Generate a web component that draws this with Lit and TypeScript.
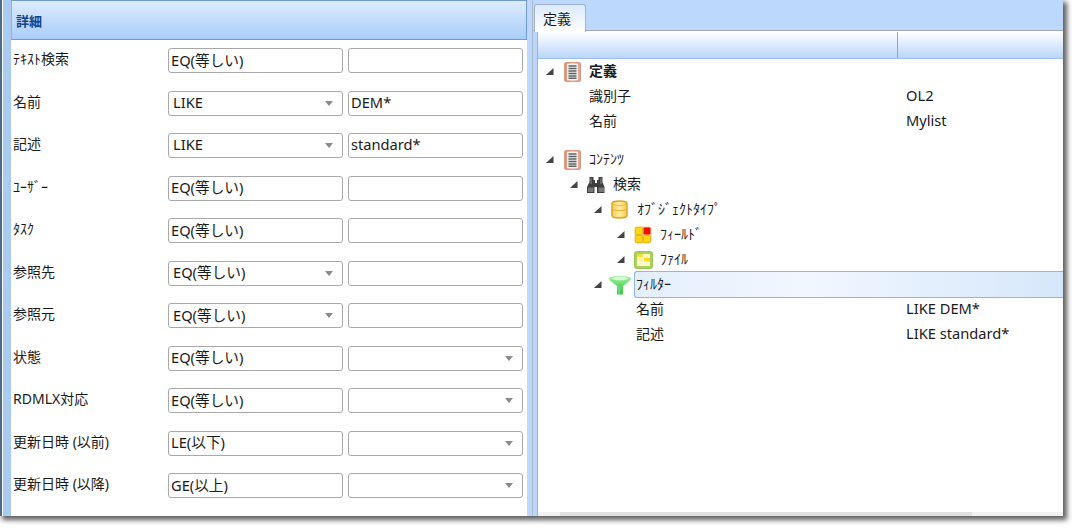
import { LitElement, html, css, svg } from "lit";
import { customElement } from "lit/decorators.js";

type F = { t: string; dd?: boolean };
const rows: { label: string; a: F; b: F }[] = [
  { label: "ﾃｷｽﾄ検索", a: { t: "EQ(等しい)" }, b: { t: "" } },
  { label: "名前", a: { t: "LIKE", dd: true }, b: { t: "DEM*" } },
  { label: "記述", a: { t: "LIKE", dd: true }, b: { t: "standard*" } },
  { label: "ﾕｰｻﾞｰ", a: { t: "EQ(等しい)" }, b: { t: "" } },
  { label: "ﾀｽｸ", a: { t: "EQ(等しい)" }, b: { t: "" } },
  { label: "参照先", a: { t: "EQ(等しい)", dd: true }, b: { t: "" } },
  { label: "参照元", a: { t: "EQ(等しい)", dd: true }, b: { t: "" } },
  { label: "状態", a: { t: "EQ(等しい)" }, b: { t: "", dd: true } },
  { label: "RDMLX対応", a: { t: "EQ(等しい)" }, b: { t: "", dd: true } },
  { label: "更新日時 (以前)", a: { t: "LE(以下)" }, b: { t: "", dd: true } },
  { label: "更新日時 (以降)", a: { t: "GE(以上)" }, b: { t: "", dd: true } },
];

const icons: Record<string, unknown> = {
  doc: svg`<svg width="17" height="20" viewBox="0 0 17 20"><defs><linearGradient id="dg" x1="0" x2="1"><stop offset="0" stop-color="#d98c70"/><stop offset=".5" stop-color="#f3d9cd"/><stop offset="1" stop-color="#dd9c82"/></linearGradient></defs><rect x=".5" y=".5" width="16" height="19" rx="1.500" fill="url(#dg)" stroke="#d9987f"/><rect x="3" y="2" width="11" height="16" fill="#f4f1ee"/><path d="M4.500 4h8M4.500 6.500h8M4.500 9h8M4.500 11.500h8M4.500 14h8M4.500 16.200h8" stroke="#5f6468" stroke-width="1.400"/></svg>`,
  bino: svg`<svg width="18" height="18" viewBox="0 0 18 18"><path d="M2.500 1h4v3h1.500v3h2V4h1.500V1h4v5l2 5v6h-7.500v-6h-2.500v6H0v-6l2.500-5z" fill="#3e3e3e"/><rect x="1" y="11.500" width="5.500" height="4.500" fill="#777"/><rect x="11.500" y="11.500" width="5.500" height="4.500" fill="#777"/><path d="M4 2v6M14 2v6" stroke="#8c8c8c"/></svg>`,
  db: svg`<svg width="17" height="19" viewBox="0 0 17 19"><defs><linearGradient id="yg" x1="0" x2="1"><stop offset="0" stop-color="#f8cf55"/><stop offset=".5" stop-color="#ffeb9c"/><stop offset="1" stop-color="#f6ca4c"/></linearGradient></defs><path d="M1 3.500C1 .2 16 .2 16 3.500v12c0 3.300-15 3.300-15 0z" fill="url(#yg)" stroke="#d9a52e" stroke-width="1.500"/><path d="M2 9.500c3 1.500 10 1.500 13 0" stroke="#d8ae42" fill="none"/><path d="M2 4.500c3 1.500 10 1.500 13 0" stroke="#e3bf58" fill="none"/></svg>`,
  field: svg`<svg width="18" height="18" viewBox="0 0 18 18"><rect x=".5" y=".5" width="17" height="17" rx="3" fill="#f3cd72"/><rect x="1.500" y="1.500" width="7" height="7" rx="1" fill="#fcd90f" stroke="#e0aa18" stroke-width=".7"/><rect x="9.500" y="1.500" width="7" height="7" rx="1" fill="#ee0f0f"/><rect x="1.500" y="9.500" width="7" height="7" rx="1" fill="#fcd90f" stroke="#e0aa18" stroke-width=".7"/><rect x="9.500" y="9.500" width="7" height="7" rx="1" fill="#fcd90f" stroke="#e0aa18" stroke-width=".7"/></svg>`,
  file: svg`<svg width="19" height="18" viewBox="0 0 19 18"><rect x=".5" y=".5" width="18" height="17" rx="2" fill="#a9d25c" stroke="#9cc650"/><rect x="3" y="3" width="13" height="12" fill="#fdf6c6"/><rect x="3" y="3" width="6.500" height="3" fill="#f7dc40"/><rect x="9.500" y="6" width="6.500" height="5" fill="#f9dc20"/><rect x="3" y="6.500" width="6" height="4" fill="#faf0a8"/><path d="M3 6.500h13M3 11h13M9.500 3v12" stroke="#fff" stroke-width=".7"/></svg>`,
  funnel: svg`<svg width="22" height="20" viewBox="0 0 22 20"><defs><linearGradient id="fg" x1="0" x2="0" y1="0" y2="1"><stop offset="0" stop-color="#a8eea6"/><stop offset=".5" stop-color="#5fdc68"/><stop offset="1" stop-color="#3fc04f"/></linearGradient></defs><path d="M0 3.500C0 .2 22 .2 22 3.500c0 2.500-5.500 5-8 7.500v8.500H8V11C5.500 8.500 0 6 0 3.500z" fill="url(#fg)"/><ellipse cx="11" cy="3.500" rx="8" ry="1.800" fill="#d6f8d2"/><path d="M10 11v8" stroke="#8be890"/></svg>`,
};

type N = { level: number; text: string; icon?: string; arrow?: boolean; value?: string; bold?: boolean; sel?: boolean; plain?: boolean; gap?: boolean };
const tree: N[] = [
  { level: 0, text: "定義", icon: "doc", arrow: true, bold: true },
  { level: 1, text: "識別子", value: "OL2", plain: true },
  { level: 1, text: "名前", value: "Mylist", plain: true },
  { level: 0, text: "ｺﾝﾃﾝﾂ", icon: "doc", arrow: true, gap: true },
  { level: 1, text: "検索", icon: "bino", arrow: true },
  { level: 2, text: "ｵﾌﾞｼﾞｪｸﾄﾀｲﾌﾟ", icon: "db", arrow: true },
  { level: 3, text: "ﾌｨｰﾙﾄﾞ", icon: "field", arrow: true },
  { level: 3, text: "ﾌｧｲﾙ", icon: "file", arrow: true },
  { level: 2, text: "ﾌｨﾙﾀｰ", icon: "funnel", arrow: true, sel: true },
  { level: 3, text: "名前", value: "LIKE DEM*", plain: true },
  { level: 3, text: "記述", value: "LIKE standard*", plain: true },
];

const arrowIcon = svg`<svg width="9" height="9" viewBox="0 0 9 9"><path d="M8.500 1V8H1z" fill="#444"/></svg>`;

@customElement("app-root")
export class AppRoot extends LitElement {
  static styles = css`
    :host { display: block; width: 1078px; height: 531px; background: #fff; overflow: hidden;
      font-family: "Noto Sans", "Noto Sans CJK JP", sans-serif; font-size: 14.67px; color: #1a1a1a; }
    .win { display: flex; width: 1063px; height: 516px; background: #bcd9fd;
      box-shadow: 3px 3px 5px 1px rgba(40,40,40,.75); }
    .strip { width: 8px; margin-left: 3px; background: #a9cbf0; flex: none; box-shadow: -1px 0 0 #fff, -3px 0 0 #4f6b8c; }
    .left { width: 516px; flex: none; background: #fff; display: flex; flex-direction: column; }
    .head { height: 40px; box-sizing: border-box; border: 1px solid #6f9bd1; border-left-color: #8fb4e0;
      background: linear-gradient(#ddecfe, #a9cdf8); color: #15428b; font-weight: 700; font-size: 13px;
      display: flex; align-items: center; padding-left: 4px; }
    .form { display: grid; grid-template-columns: 152px 175px 175px; column-gap: 5px; grid-auto-rows: 25px;
      row-gap: 17.55px; padding: 8px 0 0 0; align-items: center; }
    .label { padding: 0 0 5px 2px; white-space: nowrap; font-size: 14px; }
    .f { box-sizing: border-box; height: 25px; border: 1px solid #a8a8a8; border-radius: 3px; background: #fff;
      display: flex; align-items: center; padding: 0 0 3px 2px; white-space: nowrap; }
    .f.dd { padding-left: 4px; }
    .f span { flex: 1; }
    .f i { width: 0; height: 0; border: 4px solid transparent; border-top: 5px solid #8a8a8a; border-bottom: 0; margin: 3px 9px 0 0; }
    .right { flex: 1; display: flex; flex-direction: column; min-width: 0; margin-left: 1px; padding-left: 5px; position: relative; }
    .right::before { content: ""; position: absolute; left: 4px; top: 0; bottom: 0; width: 1px; background: #aab8cc; }
    .tabs { height: 31px; flex: none; box-sizing: border-box; padding: 3px 0 0 1px; border-bottom: 1px solid #a3a9b3; display: flex; }
    .tab { width: 52px; height: 28px; box-sizing: border-box; border: 1px solid #a3b4c8; border-bottom: 0; border-radius: 3px 3px 0 0;
      background: linear-gradient(#dbeafd, #fff); display: flex; align-items: center; padding: 0 0 2px 8px; position: relative; top: 1px; font-size: 14px; }
    .pane { flex: 1; margin-left: 4px; border-left: 1px solid #9db0ca; background: #fff; display: flex; flex-direction: column; min-height: 0; padding-top: 1px; }
    .cols { height: 27px; flex: none; box-sizing: border-box; border-bottom: 1px solid #9cc0ee;
      background: linear-gradient(#fff, #b9d6fb); display: flex; }
    .cols div:first-child { width: 359px; border-right: 1px solid #8aa6c8; }
    .tree { flex: 1; min-height: 0; }
    .row { height: 25px; display: flex; align-items: center; white-space: nowrap; }
    .row.gap { margin-top: 13px; }
    .tw { width: 9px; height: 9px; flex: none; margin-right: 10px; display: flex; }
    .ic { flex: none; display: flex; align-items: center; width: 25px; }
    .ic.bino, .ic.db, .ic.field, .ic.file { width: 26px; margin-left: -1px; }
    .ic.funnel { width: 25px; margin-left: -3px; }
    .name, .val { padding-bottom: 3px; }
    .name { font-size: 14px; }
    .b { font-weight: 700; }
    .l0 { padding-left: 7px; } .l1 { padding-left: 31px; } .l2 { padding-left: 55px; } .l3 { padding-left: 78px; }
    .l1.plain { padding-left: 51px; } .l3.plain { padding-left: 98px; }
    .l1.plain .name { width: 317px; } .l3.plain .name { width: 270px; }
    .sel { height: 25px; flex: 1; border: 1px solid #8fb6e4; border-right: 0; border-radius: 3px 0 0 3px; padding-left: 1px;
      background: linear-gradient(90deg, #e4effc, #f1f7ff 40%, #d6e7fb); line-height: 23px; font-size: 14px; }
    .scroll { height: 4px; flex: none; background: #f2f2f2; }
    .thumb { width: 412px; height: 4px; margin-left: 22px; background: #e0e0e0; }
  `;

  field(f: F) {
    return html`<div class="f ${f.dd ? "dd" : ""}"><span>${f.t}</span>${f.dd ? html`<i></i>` : ""}</div>`;
  }

  node(n: N) {
    return html`<div class="row l${n.level} ${n.plain ? "plain" : ""} ${n.gap ? "gap" : ""}">
      ${n.plain ? "" : html`<div class="tw">${n.arrow ? arrowIcon : ""}</div><div class="ic ${n.icon ?? ""}">${n.icon ? icons[n.icon] : ""}</div>`}
      <div class="${n.sel ? "sel" : "name"} ${n.bold ? "b" : ""}">${n.text}</div>
      ${n.value ? html`<div class="val">${n.value}</div>` : ""}
    </div>`;
  }

  render() {
    return html`<div class="win">
      <div class="strip"></div>
      <div class="left">
        <div class="head">詳細</div>
        <div class="form">
          ${rows.map((r) => html`<div class="label">${r.label}</div>${this.field(r.a)}${this.field(r.b)}`)}
        </div>
      </div>
      <div class="right">
        <div class="tabs"><div class="tab">定義</div></div>
        <div class="pane">
          <div class="cols"><div></div><div></div></div>
          <div class="tree">${tree.map((n) => this.node(n))}</div>
          <div class="scroll"><div class="thumb"></div></div>
        </div>
      </div>
    </div>`;
  }
}
